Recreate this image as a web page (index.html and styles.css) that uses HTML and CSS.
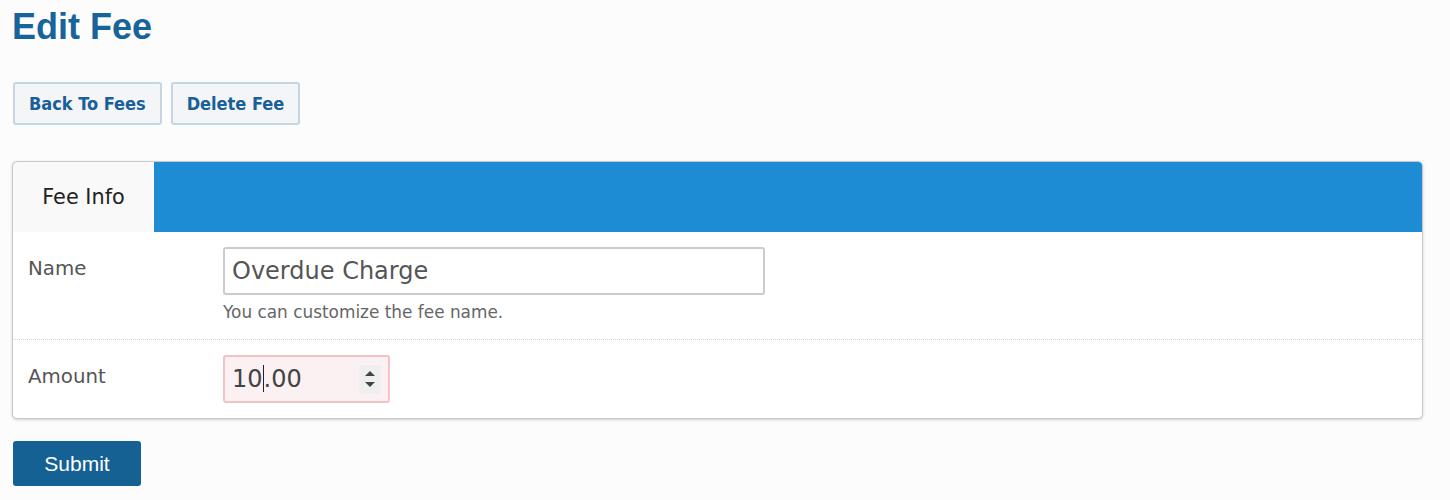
FILE: index.html
```html
<!DOCTYPE html>
<html lang="en">
<head>
<meta charset="utf-8">
<title>Edit Fee</title>
<link rel="stylesheet" href="styles.css">
</head>
<body>
<div class="page">
  <h1 class="title">Edit Fee</h1>
  <div class="actions">
    <button class="btn-secondary" type="button">Back To Fees</button>
    <button class="btn-secondary" type="button">Delete Fee</button>
  </div>
  <div class="panel">
    <div class="tabs">
      <div class="tab active">Fee Info</div>
    </div>
    <div class="row">
      <div class="label">Name</div>
      <div class="field">
        <div class="input input-name">Overdue Charge</div>
        <div class="help">You can customize the fee name.</div>
      </div>
    </div>
    <div class="row row-last">
      <div class="label">Amount</div>
      <div class="field">
        <div class="input input-amount">
          <span class="value">10<span class="caret"></span>.00</span>
          <span class="spinner">
            <svg width="12" height="22" viewBox="0 0 12 22"><path d="M1 8 L6 3 L11 8 Z" fill="#444"/><path d="M1 14 L11 14 L6 19 Z" fill="#444"/></svg>
          </span>
        </div>
      </div>
    </div>
  </div>
  <button class="btn-primary" type="button">Submit</button>
</div>
</body>
</html>
```
FILE: styles.css
```css
html, body {
  margin: 0;
  padding: 0;
  background: #fcfcfc;
}
.page {
  padding: 6px 13px 20px 13px;
  font-family: "DejaVu Sans", Verdana, sans-serif;
}
.title {
  margin: 0;
  font-family: "Liberation Sans", Arial, sans-serif;
  font-weight: bold;
  font-size: 36px;
  line-height: 41px;
  color: #17649b;
  margin-left: -1px;
}
.actions {
  display: flex;
  gap: 9px;
  margin-top: 35px;
}
.btn-secondary {
  height: 43px;
  padding: 0 14px;
  border: 2px solid #c5d6e2;
  border-radius: 3px;
  background: #f4f5f6;
  color: #17609a;
  font-family: "DejaVu Sans Condensed", "DejaVu Sans", sans-serif;
  font-weight: bold;
  font-size: 18px;
}
.panel {
  margin-top: 36px;
  margin-left: -1px;
  width: 1409px;
  border: 1px solid #c9c9c9;
  border-radius: 5px;
  background: #fff;
  box-shadow: 0 1px 3px rgba(0,0,0,0.18);
  overflow: hidden;
}
.tabs {
  display: flex;
  height: 70px;
  background: #1e8cd4;
}
.tab {
  width: 141px;
  display: flex;
  align-items: center;
  justify-content: center;
  background: #f9f9f9;
  color: #222;
  font-size: 20.8px;
}
.row {
  display: flex;
  padding: 15px 15px 17px 15px;
  border-bottom: 1px dotted #d4d4d4;
}
.row-last {
  border-bottom: none;
  padding-bottom: 15px;
}
.label {
  width: 195px;
  flex: none;
  padding-top: 10px;
  font-size: 19.8px;
  color: #555;
}
.field {
  display: flex;
  flex-direction: column;
}
.input {
  box-sizing: border-box;
  height: 48px;
  border: 2px solid #cbcbcb;
  border-radius: 3px;
  display: flex;
  align-items: center;
  padding-left: 7px;
  font-size: 24px;
  color: #555;
  background: #fff;
}
.input-name {
  width: 542px;
}
.help {
  margin-top: 7px;
  font-size: 16.9px;
  color: #666;
}
.input-amount {
  width: 167px;
  border-color: #f6c2c4;
  background: #fcf1f2;
  justify-content: space-between;
  padding-right: 7px;
  color: #444;
}
.caret {
  display: inline-block;
  width: 1px;
  height: 27px;
  background: #222;
  vertical-align: -5px;
}
.spinner {
  width: 22px;
  height: 29px;
  background: #efefef;
  display: flex;
  align-items: center;
  justify-content: center;
}
.btn-primary {
  margin-top: 22px;
  width: 128px;
  height: 45px;
  border: none;
  border-radius: 3px;
  background: #156194;
  color: #fff;
  font-family: "Liberation Sans", Arial, sans-serif;
  font-size: 21px;
}
```
